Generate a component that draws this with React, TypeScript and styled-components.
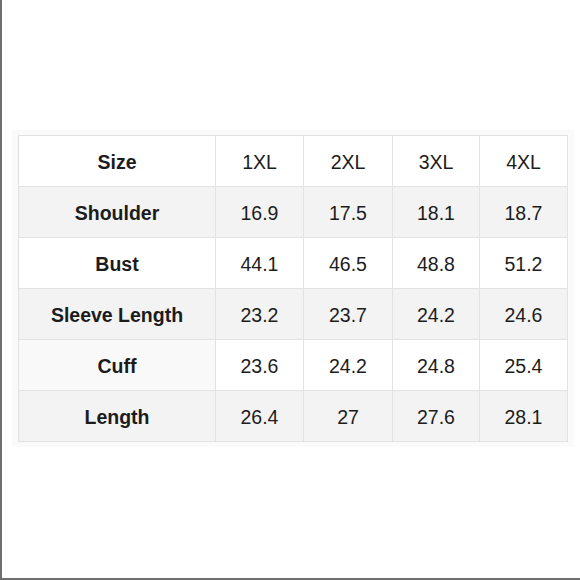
import React from 'react';
import styled, {createGlobalStyle} from 'styled-components';

const GlobalStyle = createGlobalStyle`
    html, body {
        margin: 0;
        padding: 0;
        background: #ffffff;
    }
`;

const Page = styled.div`
    box-sizing: border-box;
    width: 580px;
    height: 580px;
    border-left: 2px solid #6f6f6f;
    border-bottom: 2px solid #6f6f6f;
    padding: 130px 0 0 10px;
    font-family: 'Liberation Sans', Arial, sans-serif;
`;

const Panel = styled.div`
    width: max-content;
    padding: 5px 6px;
    background: #fafafa;
`;

const Grid = styled.div`
    display: grid;
    grid-template-columns: 197px 88px 89px 87px 88px;
    grid-auto-rows: 51px;
    border-top: 1px solid #e2e2e2;
    border-left: 1px solid #e2e2e2;
    width: max-content;
`;

const Cell = styled.div<{$shade: string; $bold?: boolean}>`
    display: flex;
    align-items: center;
    justify-content: center;
    padding-top: 2px;
    background: ${(p) => p.$shade};
    border-right: 1px solid #e2e2e2;
    border-bottom: 1px solid #e2e2e2;
    font-size: 19.5px;
    font-weight: ${(p) => (p.$bold ? 700 : 400)};
    color: #1c1c1c;
`;

const rows: {label: string; values: string[]; shade: string; labelShade?: string}[] = [
    {label: 'Size', values: ['1XL', '2XL', '3XL', '4XL'], shade: '#ffffff'},
    {label: 'Shoulder', values: ['16.9', '17.5', '18.1', '18.7'], shade: '#f3f3f3'},
    {label: 'Bust', values: ['44.1', '46.5', '48.8', '51.2'], shade: '#ffffff'},
    {label: 'Sleeve Length', values: ['23.2', '23.7', '24.2', '24.6'], shade: '#f3f3f3'},
    {label: 'Cuff', values: ['23.6', '24.2', '24.8', '25.4'], shade: '#ffffff', labelShade: '#f9f9f9'},
    {label: 'Length', values: ['26.4', '27', '27.6', '28.1'], shade: '#f3f3f3'},
];

export default function App() {
    return (
        <>
            <GlobalStyle />
            <Page>
                <Panel>
                    <Grid>
                        {rows.map((row) => (
                            <React.Fragment key={row.label}>
                                <Cell $shade={row.labelShade ?? row.shade} $bold>
                                    {row.label}
                                </Cell>
                                {row.values.map((v, i) => (
                                    <Cell key={i} $shade={row.shade}>
                                        {v}
                                    </Cell>
                                ))}
                            </React.Fragment>
                        ))}
                    </Grid>
                </Panel>
            </Page>
        </>
    );
}
